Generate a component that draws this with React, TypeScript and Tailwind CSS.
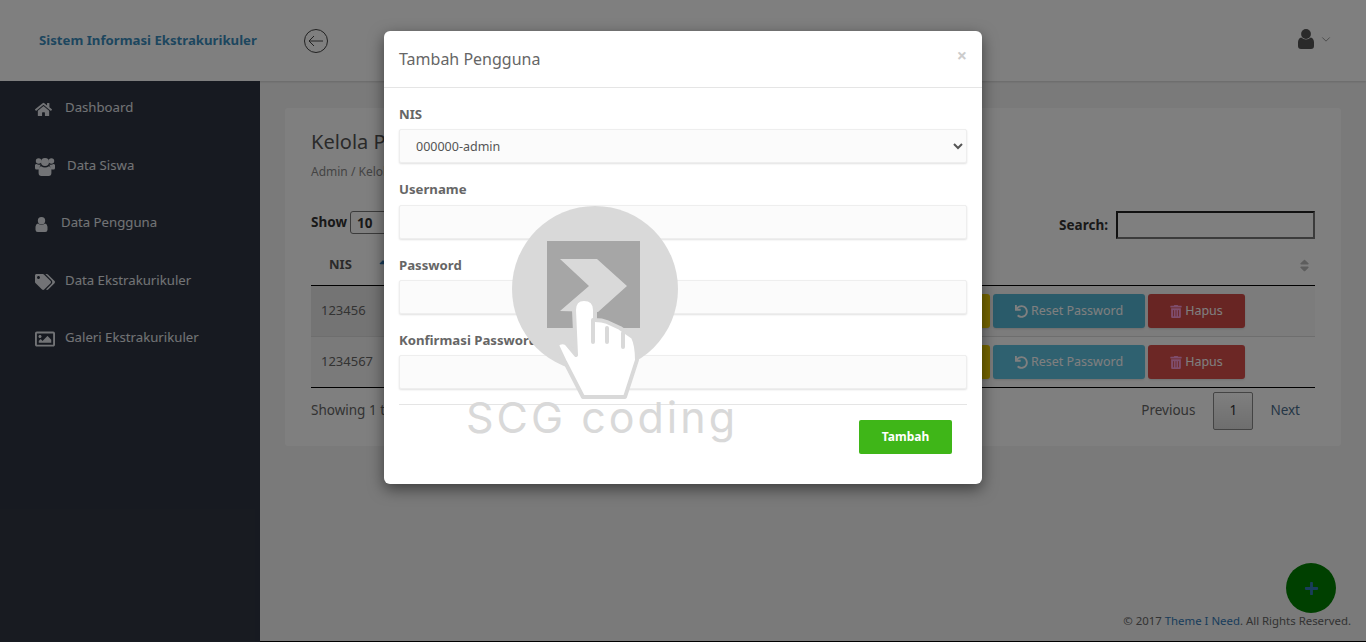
import type { ReactNode } from "react";
import { FaHome, FaPlus, FaRegImage, FaSort, FaSortUp, FaTags, FaTrashAlt, FaUndo } from "react-icons/fa";

function UserIcon({ className }: { className: string }) {
  return (
    <svg viewBox="0 0 16 20" className={className} fill="currentColor">
      <circle cx="8" cy="5" r="4.9" />
      <path d="M3.2 8.6 Q8 12.4 12.8 8.6 Q15.6 9.4 16 13 V17 Q16 20 13 20 H3 Q0 20 0 17 V13 Q0.4 9.4 3.2 8.6 Z" />
    </svg>
  );
}

function UsersIcon({ className }: { className: string }) {
  return (
    <svg viewBox="0 0 20 19" className={className} fill="currentColor">
      <circle cx="3.6" cy="4" r="2.8" />
      <circle cx="16.4" cy="4" r="2.8" />
      <circle cx="10" cy="5" r="4" />
      <path d="M0 8 Q0.4 7 1.6 7 Q3.6 8.4 5.6 7.4 Q4.4 9.6 4.4 12.6 H1.4 Q0 12.6 0 11 Z" />
      <path d="M20 8 Q19.6 7 18.4 7 Q16.4 8.4 14.4 7.4 Q15.6 9.6 15.6 12.6 H18.6 Q20 12.6 20 11 Z" />
      <path d="M6 9.2 Q10 11.6 14 9.2 Q16.4 10 16.4 13.6 V16 Q16.4 19 13.6 19 H6.4 Q3.6 19 3.6 16 V13.6 Q3.6 10 6 9.2 Z" />
    </svg>
  );
}

const menu: { label: string; icon: ReactNode; gap: string }[] = [
  { label: "Dashboard", icon: <FaHome className="h-[17px] w-[17px]" />, gap: "mr-[13px]" },
  { label: "Data Siswa", icon: <UsersIcon className="h-[19px] w-[20px]" />, gap: "mr-[12px]" },
  { label: "Data Pengguna", icon: <UserIcon className="h-[15px] w-[13px]" />, gap: "mr-[13px]" },
  { label: "Data Ekstrakurikuler", icon: <FaTags className="h-[20px] w-[20px]" />, gap: "mr-[10px]" },
  { label: "Galeri Ekstrakurikuler", icon: <FaRegImage className="h-[20px] w-[20px]" />, gap: "mr-[10px]" },
];

const rows = [
  { nis: "123456", nisBg: "bg-[#e9e9e9]", bg: "bg-[#f9f9f9]", reset: "bg-[#55b6d4]", del: "bg-[#d14a46]" },
  { nis: "1234567", nisBg: "bg-[#f5f5f5]", bg: "bg-white", reset: "bg-[#5fc2e0]", del: "bg-[#d94f4b]" },
];

function ActionButton({ className, children }: { className: string; children?: ReactNode }) {
  return (
    <button className={`flex h-[34px] items-center justify-center gap-[3px] rounded-[3px] pt-[2px] text-[12.5px] text-white shadow-sm ${className}`}>
      {children}
    </button>
  );
}

function Field({ label, gap = "mb-[5px]", bottom = "mb-[16px]", children }: { label: string; gap?: string; bottom?: string; children: ReactNode }) {
  return (
    <div className={bottom}>
      <label className={`block h-[20px] text-[13.2px] leading-5 font-bold text-[#666] ${gap}`}>{label}</label>
      {children}
    </div>
  );
}

function TextField() {
  return <input className="block h-[34px] w-full rounded-[2px] border border-[#eee] bg-[#fbfbfb] shadow-[0_1px_2px_rgba(0,0,0,0.12)]" />;
}

function Watermark() {
  return (
    <div className="pointer-events-none absolute top-[200px] left-[460px] h-[245px] w-[285px]">
      <svg viewBox="460 200 285 245" className="absolute inset-0 h-full w-full">
        <circle cx="595" cy="289" r="83" fill="#d9d9d9" />
        <rect x="547" y="241" width="93" height="87" fill="#a6a6a6" />
        <polygon points="560,259 597,259 627,286 598,312 560,311 589,286" fill="#d9d9d9" />
        <path
          d="M583 397 L565 362 L557 345 Q560 341 566 343 L576 355 L574 310 Q574 299 584 299 Q595 299 595 310 L595 320 Q602 320 607 322 L620 328 L633 337 Q637 345 637 360 L625 397 Z"
          fill="#fff"
          stroke="#d9d9d9"
          strokeWidth="4"
          strokeLinejoin="round"
        />
        <path d="M593 320 V342 M607 328 V342 M623 333 V347" fill="none" stroke="#d9d9d9" strokeWidth="4" strokeLinecap="round" />
      </svg>
      <div className="absolute top-[192px] left-[6px] font-['Inter'] text-[43px] leading-[50px] font-normal tracking-[3px] whitespace-nowrap text-[#d9d9d9]">
        SCG coding
      </div>
    </div>
  );
}

export default function App() {
  return (
    <div className="relative flex h-screen flex-col overflow-hidden bg-[#f4f4f4] font-['Noto_Sans',sans-serif] text-[13px] text-[#555]">
      <header className="flex h-[81px] shrink-0 items-center bg-white shadow-[0_1px_2px_rgba(0,0,0,0.15)]">
        <div className="w-[304px] pt-[1px] pl-[39px] text-[13.2px] font-bold whitespace-nowrap text-[#3b8dbd]">Sistem Informasi Ekstrakurikuler</div>
        <svg viewBox="0 0 24 24" className="h-[24px] w-[24px]" fill="none" stroke="#444" strokeWidth="1">
          <circle cx="12" cy="12" r="11.5" />
          <path d="M19 12H5 M10 7l-5 5 5 5" />
        </svg>
        <div className="mr-[35px] mb-[4px] ml-auto flex items-center gap-[7px] text-[#555]">
          <UserIcon className="h-[20px] w-[16px]" />
          <svg viewBox="0 0 10 6" className="mt-[2px] h-[5px] w-[10px]" fill="none" stroke="#666" strokeWidth="0.8">
            <path d="M0.5 0.5 L5 5 L9.5 0.5" />
          </svg>
        </div>
      </header>

      <div className="flex min-h-0 flex-1">
        <aside className="w-[260px] shrink-0 bg-[#2f3542] pl-[35px] text-[#e4e7ec]">
          {menu.map((item) => (
            <div key={item.label} className="flex h-[57.5px] items-start pt-4">
              <span className={`flex h-5 translate-y-[2px] items-center ${item.gap}`}>{item.icon}</span>
              <span className="text-[13.2px] leading-5 whitespace-nowrap">{item.label}</span>
            </div>
          ))}
        </aside>

        <main className="flex min-w-0 flex-1 flex-col">
          <section className="mx-[25px] mt-[27px] h-[338px] rounded-[3px] bg-white px-[26px] pt-[20px]">
            <h2 className="text-[20px] leading-[28px] text-[#555]">Kelola Pengguna</h2>
            <p className="mt-[7px] text-[12px] leading-[18px] text-[#888]">Admin / Kelola Pengguna</p>
            <div className="mt-[30px] flex h-[28px] items-start justify-between text-[13.5px]">
              <div className="flex items-center gap-[3px] font-bold text-[#333]">
                Show
                <select className="h-[23px] w-[60px] rounded-[3px] border border-[#777] bg-white pl-[2px] font-bold text-[#333]">
                  <option>10</option>
                </select>
              </div>
              <div className="flex items-center gap-[8px] font-bold text-[#333]">
                Search:
                <input className="h-[28px] w-[199px] border-2 border-t-[#222] border-r-[#777] border-b-[#777] border-l-[#222]" />
              </div>
            </div>
            <table className="mt-[6px] w-full table-fixed border-collapse">
              <colgroup>
                <col className="w-[90px]" />
                <col className="w-[509px]" />
                <col />
              </colgroup>
              <thead>
                <tr className="h-[40px] border-b border-black text-left font-bold text-[#555]">
                  <th className="relative pl-[18px]">
                    NIS
                    <FaSortUp className="absolute top-[14px] right-[12px] h-[12px] w-[12px] text-[#337ab7]" />
                  </th>
                  <th />
                  <th className="relative">
                    <FaSort className="absolute top-[13px] right-[3px] h-[15px] w-[15px] text-[#bbb]" />
                  </th>
                </tr>
              </thead>
              <tbody>
                {rows.map((row, i) => (
                  <tr key={row.nis} className={`h-[51px] ${i === 0 ? "border-b border-[#ddd]" : "border-b border-black"} ${row.bg}`}>
                    <td className={`pl-[10px] text-[#666] ${row.nisBg}`}>{row.nis}</td>
                    <td />
                    <td className="pl-[10px]">
                      <div className="flex gap-[3px]">
                        <ActionButton className="w-[70px] bg-[#f0d000]" />
                        <ActionButton className={`w-[152px] ${row.reset}`}>
                          <FaUndo className="h-[13px] w-[13px]" />
                          Reset Password
                        </ActionButton>
                        <ActionButton className={`w-[97px] ${row.del}`}>
                          <FaTrashAlt className="h-[13px] w-[12px] text-[#ff9ad8]" />
                          Hapus
                        </ActionButton>
                      </div>
                    </td>
                  </tr>
                ))}
              </tbody>
            </table>
            <div className="mt-[4px] flex h-[38px] items-center justify-between text-[13.5px] text-[#666]">
              <span>Showing 1 to 2 of 2 entries</span>
              <div className="mr-[15px] flex items-center">
                <span className="text-[#666]">Previous</span>
                <span className="mr-[17px] ml-[18px] flex h-[38px] w-[40px] items-center justify-center rounded-[2px] border border-[#888] bg-gradient-to-b from-white to-[#ddd] text-[#333]">1</span>
                <span className="text-[#4a6d8c]">Next</span>
              </div>
            </div>
          </section>
          <div className="relative mt-auto mr-[15px] mb-[12px] text-right text-[11.4px] leading-[17px] text-[#666]">
            <button className="absolute right-[15px] bottom-[16px] flex h-[50px] w-[50px] items-center justify-center rounded-full bg-[#008000] text-[#337ab7]">
              <FaPlus className="h-[15px] w-[15px]" />
            </button>
            © 2017 <span className="text-[#337ab7]">Theme I Need</span>. All Rights Reserved.
          </div>
          <div className="h-px bg-black" />
        </main>
      </div>

      <div className="absolute inset-0 bg-black/50">
        <div className="relative mx-auto mt-[31px] h-[453px] w-[598px] rounded-[6px] bg-white shadow-[0_5px_15px_rgba(0,0,0,0.5)]">
          <div className="relative flex h-[57px] items-center border-b border-[#e5e5e5] px-[15px]">
            <h4 className="text-[16px] text-[#666]">Tambah Pengguna</h4>
            <span className="absolute top-[14px] right-[15px] text-[18px] leading-5 font-bold text-[#ccc]">×</span>
          </div>
          <form className="px-[15px] pt-[16px]">
            <Field label="NIS">
              <select className="block h-[34px] w-full rounded-[2px] border border-[#eee] bg-[#fbfbfb] pl-[12px] text-[12.5px] text-[#555] shadow-[0_1px_2px_rgba(0,0,0,0.12)]">
                <option>000000-admin</option>
              </select>
            </Field>
            <Field label="Username" gap="mb-[6px]">
              <TextField />
            </Field>
            <Field label="Password">
              <TextField />
            </Field>
            <Field label="Konfirmasi Password" bottom="mb-[15px]">
              <TextField />
            </Field>
            <div className="border-t border-[#e5e5e5] pt-[15px]">
              <button type="button" className="ml-[460px] block h-[34px] w-[93px] rounded-[2px] bg-[#3fb618] text-[12px] font-bold text-white">
                Tambah
              </button>
            </div>
          </form>
        </div>
      </div>

      <Watermark />
    </div>
  );
}
